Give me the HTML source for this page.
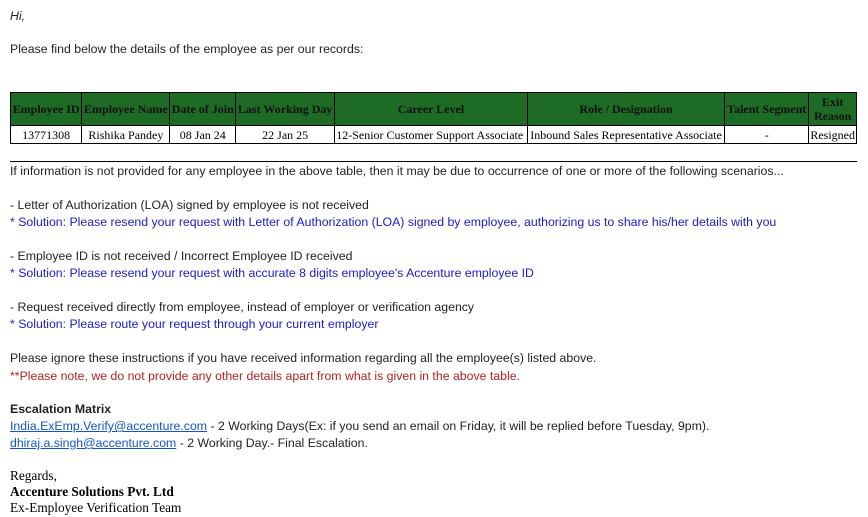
<!DOCTYPE html>
<html><head><meta charset="utf-8"><style>
body{margin:0;background:#fff;font-family:"Liberation Sans",sans-serif;font-size:12.3px;color:#222;}
.t{position:absolute;left:10px;white-space:nowrap;line-height:15px;}
.b{color:#1a1acc}.r{color:#b22222}
a{color:#1155cc;text-decoration:underline}
table{position:absolute;left:10px;top:92px;width:847px;border-collapse:collapse;font-family:"Liberation Serif",serif;font-size:12px;}
td,th{border:1px solid #000;padding:0 1px;text-align:center;line-height:14px;white-space:nowrap}
th{background:#1e6b26;color:#111;font-weight:bold;height:32px}
td{height:17px;color:#000}
.s{font-family:"Liberation Serif",serif;font-size:13.3px;color:#000}
</style></head><body>
<div class="t" style="top:9px;font-style:italic">Hi,</div>
<div class="t" style="top:42px">Please find below the details of the employee as per our records:</div>
<table>
<tr><th style="width:69px">Employee ID</th><th style="width:86px">Employee Name</th><th style="width:63px">Date of Join</th><th style="width:97px">Last Working Day</th><th style="width:191px">Career Level</th><th style="width:196px">Role / Designation</th><th style="width:82px">Talent Segment</th><th>Exit<br>Reason</th></tr>
<tr><td>13771308</td><td>Rishika Pandey</td><td>08 Jan 24</td><td>22 Jan 25</td><td style="text-align:left">12-Senior Customer Support Associate</td><td>Inbound Sales Representative Associate</td><td>-</td><td>Resigned</td></tr>
</table>
<div style="position:absolute;left:10px;top:161px;width:847px;border-top:1px solid #000"></div>
<div class="t" style="top:164px">If information is not provided for any employee in the above table, then it may be due to occurrence of one or more of the following scenarios...</div>
<div class="t" style="top:198px">- Letter of Authorization (LOA) signed by employee is not received</div>
<div class="t b" style="top:215px">* Solution: Please resend your request with Letter of Authorization (LOA) signed by employee, authorizing us to share his/her details with you</div>
<div class="t" style="top:249px">- Employee ID is not received / Incorrect Employee ID received</div>
<div class="t b" style="top:266px">* Solution: Please resend your request with accurate 8 digits employee's Accenture employee ID</div>
<div class="t" style="top:300px">- Request received directly from employee, instead of employer or verification agency</div>
<div class="t b" style="top:317px">* Solution: Please route your request through your current employer</div>
<div class="t" style="top:351px">Please ignore these instructions if you have received information regarding all the employee(s) listed above.</div>
<div class="t r" style="top:369px">**Please note, we do not provide any other details apart from what is given in the above table.</div>
<div class="t" style="top:402px;font-weight:bold">Escalation Matrix</div>
<div class="t" style="top:419px"><a>India.ExEmp.Verify@accenture.com</a> - 2 Working Days(Ex: if you send an email on Friday, it will be replied before Tuesday, 9pm).</div>
<div class="t" style="top:436px"><a>dhiraj.a.singh@accenture.com</a> - 2 Working Day.- Final Escalation.</div>
<div class="t s" style="top:468px">Regards,</div>
<div class="t s" style="top:484px;font-weight:bold">Accenture Solutions Pvt. Ltd</div>
<div class="t s" style="top:500px">Ex-Employee Verification Team</div>
</body></html>
